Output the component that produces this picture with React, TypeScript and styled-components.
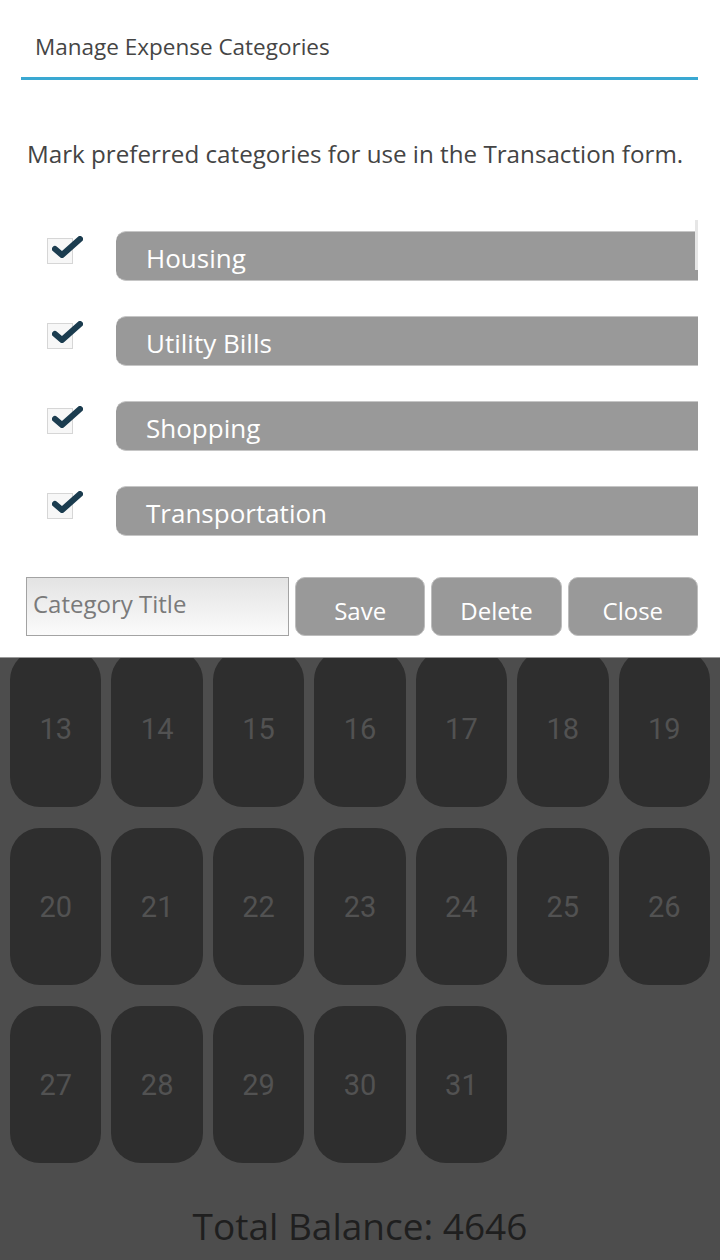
import styled, { createGlobalStyle } from 'styled-components';

const GlobalStyle = createGlobalStyle`
    html, body {
        margin: 0;
        padding: 0;
    }
    body {
        background: #4d4d4d;
        font-family: "Open Sans", "Noto Sans", sans-serif;
    }
`;

const Page = styled.div`
    position: relative;
    width: 720px;
    height: 1260px;
    overflow: hidden;
    background: #4d4d4d;
`;

// Calendar under the dialog (rows above 13 are hidden by it).

const DayGrid = styled.div`
    display: grid;
    grid-template-columns: repeat(7, 1fr);
    grid-auto-rows: 157px;
    column-gap: 10px;
    row-gap: 21px;
    padding: 650px 10px 0;
`;

const DayCell = styled.div`
    background: #2e2e2e;
    border-radius: 30px;
    display: flex;
    align-items: center;
    justify-content: center;
    font-family: Roboto, "Liberation Sans", sans-serif;
    font-size: 29px;
    color: #525252;
`;

const Balance = styled.div`
    margin-top: 40px;
    text-align: center;
    font-size: 37px;
    line-height: 46px;
    color: #1f1f1f;
`;

// Dialog.

const Dialog = styled.section`
    position: absolute;
    top: 0;
    left: 0;
    right: 0;
    height: 657px;
    background: #fff;
    border-bottom: 1px solid #9a9a9a;
    display: flex;
    flex-direction: column;
`;

const Header = styled.header`
    margin: 0 22px 0 21px;
    padding: 33px 0 16px 14px;
    border-bottom: 3px solid #3aa8d2;
`;

const Title = styled.h1`
    margin: 0;
    font-size: 22.5px;
    line-height: 28px;
    font-weight: 400;
    color: #454545;
`;

const Intro = styled.p`
    margin: 58px 0 0 27px;
    font-size: 24.2px;
    line-height: 32px;
    color: #444;
`;

const List = styled.div`
    position: relative;
    margin: 50px 22px 0 21px;
    padding-top: 11px;
    height: 314px;
    overflow: hidden;
    display: flex;
    flex-direction: column;
    gap: 35px;
`;

const ScrollThumb = styled.div`
    position: absolute;
    top: 0;
    right: 0;
    width: 3px;
    height: 50px;
    background: #e6e6e6;
`;

const Row = styled.div`
    display: flex;
    align-items: flex-start;
    padding-left: 26px;
`;

const CheckBox = styled.div`
    position: relative;
    flex: none;
    width: 24px;
    height: 24px;
    margin-top: 7px;
    border: 1px solid #d6d6d6;
    background: #f7f7f7;
`;

const CheckMark = styled.svg`
    position: absolute;
    left: 1px;
    top: -5px;
    width: 34px;
    height: 28px;
    filter: blur(0.7px);
`;

const CategoryBar = styled.div`
    box-sizing: border-box;
    flex: 1;
    margin-left: 43px;
    margin-right: -30px;
    height: 50px;
    border-top: 1px solid #c6c6c6;
    border-bottom: 1px solid #c6c6c6;
    border-radius: 10px 0 0 10px;
    background: #999;
    color: #fff;
    font-size: 26px;
    line-height: 42px;
    padding: 5px 0 0 30px;
    white-space: nowrap;
`;

const Actions = styled.div`
    display: flex;
    gap: 6px;
    margin: auto 22px 21px 26px;
    height: 59px;
`;

const TitleInput = styled.input`
    box-sizing: border-box;
    width: 263px;
    height: 59px;
    border: 1px solid #a3a3a3;
    background: linear-gradient(#e3e3e3, #fbfbfb);
    padding: 0 0 6px 6px;
    font-family: inherit;
    font-size: 24px;
    color: #333;
    outline: none;
    &::placeholder {
        color: #7a7a7a;
    }
`;

const ActionButton = styled.button`
    flex: 1;
    height: 59px;
    border: 1px solid #bdbdbd;
    border-radius: 10px;
    background: #999;
    color: #fff;
    font-family: inherit;
    font-size: 24px;
    padding: 7px 0 0;
`;

const categories = ['Housing', 'Utility Bills', 'Shopping', 'Transportation'];

const days = Array.from({ length: 19 }, (_, i) => i + 13);

const App = () => {
    return (
        <Page>
            <GlobalStyle />
            <DayGrid>
                {days.map(d => (
                    <DayCell key={d}>{d}</DayCell>
                ))}
            </DayGrid>
            <Balance>Total Balance: 4646</Balance>

            <Dialog>
                <Header>
                    <Title>Manage Expense Categories</Title>
                </Header>
                <Intro>Mark preferred categories for use in the Transaction form.</Intro>
                <List>
                    <ScrollThumb />
                    {categories.map(c => (
                        <Row key={c}>
                            <CheckBox>
                                <CheckMark viewBox="0 0 34 28">
                                    <path d="M6 15 L13 21 L31 5" fill="none" stroke="#1b3c4f" strokeWidth="6" strokeLinecap="round" strokeLinejoin="round" />
                                </CheckMark>
                            </CheckBox>
                            <CategoryBar>{c}</CategoryBar>
                        </Row>
                    ))}
                </List>
                <Actions>
                    <TitleInput placeholder="Category Title" />
                    <ActionButton>Save</ActionButton>
                    <ActionButton>Delete</ActionButton>
                    <ActionButton>Close</ActionButton>
                </Actions>
            </Dialog>
        </Page>
    );
};

export default App;
